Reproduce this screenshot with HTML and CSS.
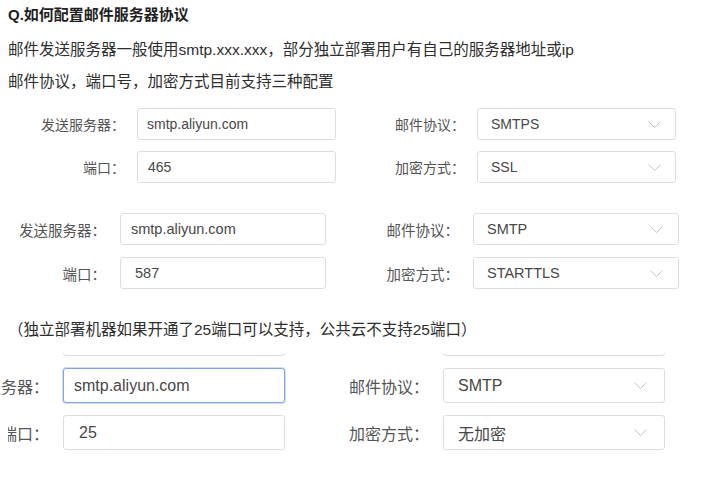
FILE: index.html
```html
<!DOCTYPE html>
<html lang="zh-CN">
<head>
<meta charset="utf-8">
<title>邮件服务器协议</title>
<link rel="stylesheet" href="styles.css">
</head>
<body>
<h1 class="title">Q.如何配置邮件服务器协议</h1>
<p class="text t1">邮件发送服务器一般使用smtp.xxx.xxx，部分独立部署用户有自己的服务器地址或ip</p>
<p class="text t2">邮件协议，端口号，加密方式目前支持三种配置</p>

<div class="form f1">
  <div class="lbl">发送服务器：</div>
  <div class="field">smtp.aliyun.com</div>
  <div class="lbl">邮件协议：</div>
  <div class="field select"><span>SMTPS</span><svg class="chev" viewBox="0 0 13 7"><polyline points="0.5,0.5 6.5,6.5 12.5,0.5"/></svg></div>
  <div class="lbl">端口：</div>
  <div class="field num">465</div>
  <div class="lbl">加密方式：</div>
  <div class="field select"><span>SSL</span><svg class="chev" viewBox="0 0 13 7"><polyline points="0.5,0.5 6.5,6.5 12.5,0.5"/></svg></div>
</div>

<div class="form f2">
  <div class="lbl">发送服务器：</div>
  <div class="field">smtp.aliyun.com</div>
  <div class="lbl">邮件协议：</div>
  <div class="field select"><span>SMTP</span><svg class="chev" viewBox="0 0 13 7"><polyline points="0.5,0.5 6.5,6.5 12.5,0.5"/></svg></div>
  <div class="lbl">端口：</div>
  <div class="field num">587</div>
  <div class="lbl">加密方式：</div>
  <div class="field select"><span>STARTTLS</span><svg class="chev" viewBox="0 0 13 7"><polyline points="0.5,0.5 6.5,6.5 12.5,0.5"/></svg></div>
</div>

<p class="text note">（独立部署机器如果开通了25端口可以支持，公共云不支持25端口）</p>

<div class="form f3">
  <div class="lbl"></div>
  <div class="field cut"></div>
  <div class="lbl"></div>
  <div class="field cut"></div>
  <div class="lbl">发送服务器：</div>
  <div class="field focus">smtp.aliyun.com</div>
  <div class="lbl">邮件协议：</div>
  <div class="field select"><span>SMTP</span><svg class="chev" viewBox="0 0 13 7"><polyline points="0.5,0.5 6.5,6.5 12.5,0.5"/></svg></div>
  <div class="lbl clip">端口：</div>
  <div class="field num">25</div>
  <div class="lbl">加密方式：</div>
  <div class="field select"><span>无加密</span><svg class="chev" viewBox="0 0 13 7"><polyline points="0.5,0.5 6.5,6.5 12.5,0.5"/></svg></div>
</div>
</body>
</html>
```

FILE: styles.css
```css
html, body {
  margin: 0;
  background: #ffffff;
}
body {
  padding: 4px 0 0 8px;
  font-family: "Liberation Sans", "Noto Sans CJK SC", sans-serif;
  color: #2b2b2b;
  overflow: hidden;
}
.title {
  margin: 0;
  font-size: 15px;
  line-height: 22px;
  font-weight: bold;
  color: #1e1e1e;
}
.text {
  margin: 0;
  font-size: 15.5px;
  line-height: 22px;
  color: #2e2e2e;
  white-space: nowrap;
}
.t1 { margin-top: 13px; }
.t2 { margin-top: 10px; }
.note { margin-top: 30px; }

.form {
  display: grid;
  align-items: center;
}
.lbl {
  display: flex;
  justify-content: flex-end;
  align-items: center;
  white-space: nowrap;
  overflow: hidden;
  color: #555555;
  height: 100%;
}
.field {
  box-sizing: border-box;
  height: 100%;
  border: 1px solid #dedede;
  border-radius: 3px;
  background: #ffffff;
  color: #474747;
  display: flex;
  align-items: center;
  padding-left: 9px;
  white-space: nowrap;
}
.select {
  justify-content: space-between;
}
.chev {
  width: 13px;
  height: 7px;
  fill: none;
  stroke: #c2c4c8;
  stroke-width: 1;
}

.f1 {
  margin: 15px 0 0 33px;
  grid-template-columns: 84px 199px 117px 199px;
  grid-template-rows: 32px 32px;
  column-gap: 12px;
  row-gap: 11px;
  font-size: 14px;
}
.f1 .num { padding-left: 10px; }
.f1 .select { padding: 0 14px 0 13px; }

.f2 {
  margin: 30px 0 0 12px;
  grid-template-columns: 86px 206px 119px 206px;
  grid-template-rows: 32px 32px;
  column-gap: 14px;
  row-gap: 12px;
  font-size: 14.5px;
}
.f2 .field { padding-left: 10px; }
.f2 .num { padding-left: 14px; }
.f2 .select { padding: 0 15px 0 13px; }

.f3 {
  margin: 12px 0 0 -8px;
  overflow: hidden;
  grid-template-columns: 49px 222px 130px 222px;
  grid-template-rows: 3px 35px 35px;
  column-gap: 14px;
  row-gap: 12px;
  font-size: 16px;
}
.f3 .field { padding-left: 10px; }
.f3 .num { padding-left: 15px; }
.f3 .select { padding: 0 17px 0 14px; }
.f3 .cut {
  align-self: end;
  height: 35px;
}
.f3 .clip { margin-left: 8px; }
.focus {
  border-color: #7ea3e6;
  box-shadow: 0 0 0 1px rgba(126, 163, 230, 0.35);
}
```
